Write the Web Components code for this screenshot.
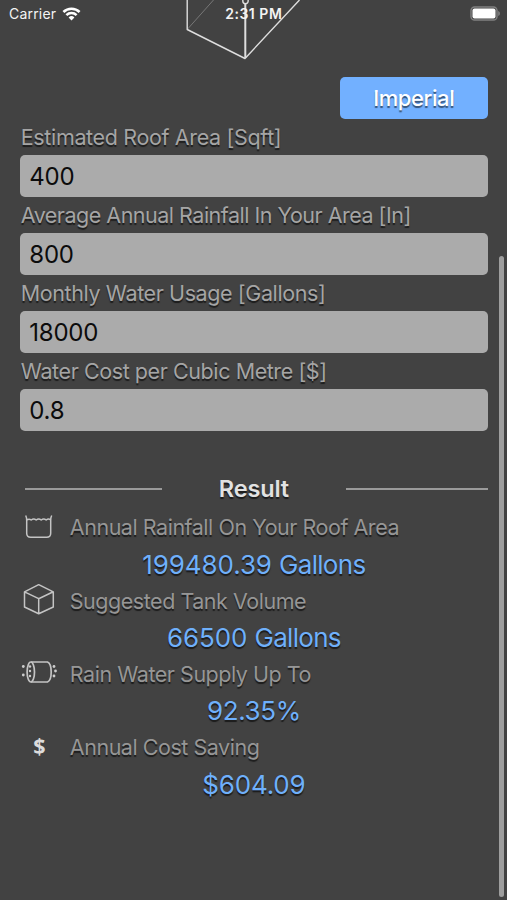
<!DOCTYPE html>
<html lang="en">
<head>
<meta charset="utf-8">
<title>Rain Water Calculator</title>
<style>
html, body { margin: 0; height: 100%; background: #424242; overflow: hidden; }
body { font-family: Inter, "Liberation Sans", sans-serif; }
</style>
</head>
<body>
<rain-app></rain-app>
<script>
const define = (name, html) => customElements.define(name, class extends HTMLElement {
  constructor() {
    super();
    this.attachShadow({ mode: 'open' }).innerHTML = html;
  }
});

define('status-bar', `
<style>
:host { display: grid; grid-template-columns: 1fr auto 1fr; align-items: center; height: 27px; padding: 0 7px 0 9px; color: #f4f4f4; box-sizing: border-box; font-size: 14px; line-height: 27px; }
.left { display: flex; align-items: center; gap: 6px; letter-spacing: .2px; }
.time { font-weight: 600; letter-spacing: .52px; margin-right: 1.500px; }
.right { display: flex; justify-content: flex-end; }
svg { display: block; }
</style>
<div class="left"><span>Carrier</span>
<svg width="19" height="15" viewBox="0 0 19 15" fill="none" stroke="#fff" stroke-width="2.5"><path d="M1.4 6a11.5 11.5 0 0 1 16.2 0M4.4 9.2a7.2 7.2 0 0 1 10.2 0"/><path d="M9.5 14.4 6.6 11.4a4.1 4.1 0 0 1 5.8 0z" fill="#fff" stroke="none"/></svg></div>
<span class="time">2:31 PM</span>
<div class="right"><svg width="30" height="15" viewBox="0 0 30 15"><rect x="1" y="1" width="26" height="13" rx="3.6" fill="none" stroke="#818181" stroke-width="1.4"/><rect x="2.5" y="2.5" width="23" height="10" rx="2" fill="#fff"/><path d="M28.200 5v5c1.300-.5 1.700-1.500 1.700-2.500s-.4-2-1.700-2.500z" fill="#818181"/></svg></div>`);

define('tank-drawing', `
<style>:host { display: block; } svg { display: block; }</style>
<svg width="130" height="62" viewBox="0 0 130 62" fill="none" stroke="#dedede" stroke-width="1.4" stroke-linejoin="round"><path d="M17.200 29.500 43.500 0" stroke="#777" stroke-width="1"/><path d="M17.200-2V29.500L75 58.500 129.500 0"/><path d="M75.300 4V58" stroke-width="2"/><circle cx="75.500" cy="1" r="2.700"/></svg>`);

define('unit-button', `
<style>
:host { display: block; }
button { display: block; width: 147.500px; height: 42px; padding: 1px 0 0; border: 0; border-radius: 5px; background: #72b0ff; color: #fff; font: 500 22px/40px Inter, sans-serif; letter-spacing: -.4px; text-shadow: 0 1.500px 1px #0008; }
</style><button type="button"><slot></slot></button>`);

customElements.define('input-field', class extends HTMLElement {
  constructor() {
    super();
    this.attachShadow({ mode: 'open' }).innerHTML = `
<style>
:host { display: block; }
label { display: block; height: 36.200px; font-size: 21.500px; line-height: 36px; padding-left: .5px; color: #a5a5a5; text-shadow: 0 1.500px 1px #0009; white-space: nowrap; letter-spacing: var(--ls, 0); }
.box { height: 42px; box-sizing: border-box; border-radius: 5px; background: #ababab; color: #0c0c0c; padding: 1px 9px 0; font-size: 24px; line-height: 42px; letter-spacing: -.25px; }
</style>
<label><slot></slot></label><div class="box"><span class="v"></span></div>`;
    this.shadowRoot.querySelector('.v').textContent = this.getAttribute('value');
  }
});

define('section-title', `
<style>
:host { display: grid; grid-template-columns: 137px 1fr 142px; align-items: center; height: 40px; padding-left: 5px; }
i { height: 1.500px; background: #9a9a9a; }
span { text-align: center; font-weight: 600; font-size: 23.500px; letter-spacing: -.15px; color: #e2e2e2; text-shadow: 0 1.500px 1px #0009; }
</style><i></i><span><slot></slot></span><i></i>`);

define('result-row', `
<style>
:host { display: block; height: 73.300px; }
.head { display: flex; align-items: center; height: 36px; }
.icon { width: 36px; height: 36px; margin-right: 13.500px; flex: none; }
.label { font-size: 21.500px; line-height: 36px; color: #969696; white-space: nowrap; text-shadow: 0 1.500px 1px #0009; letter-spacing: -.47px; padding-top: 1px; }
.value { text-align: center; font-size: 26px; line-height: 39px; color: #6fb0fb; text-shadow: 0 1.500px 1px #0009; letter-spacing: -.1px; }
::slotted(.unit) { letter-spacing: -.7px; }
</style>
<div class="head"><div class="icon"><slot name="icon"></slot></div><div class="label"><slot></slot></div></div>
<div class="value"><slot name="value"></slot></div>`);

const ICONS = {
  basin: '<path d="M5.700 6.500c.8 1.500 1 3 1 5v12.800c0 2.500 1.500 4 4 4h16c2.500 0 4-1.500 4-4v-12.800c0-2 .2-3.500 1-5M6.700 11c2-1.300 3-1.300 4.500 0 1.500-1.300 3.500-1.300 5 0 1.500-1.300 3.500-1.300 5 0 1.500-1.300 3.500-1.300 5 0 1.500-1.300 3-1.300 4.500 0"/>',
  cube: '<path d="M18.700 2.700 33.300 9.800V25L18.700 31.700 4.500 25V9.800zM4.500 9.800 18.700 16.700 33.300 9.800M18.700 16.700V31.700"/>',
  barrel: '<path d="M11 7H27.500c2.500 1 3.700 5 3.700 10s-1.200 9-3.700 10H11" stroke-width="1.700"/><ellipse cx="10.800" cy="17" rx="3.700" ry="10" stroke-width="1.700"/><g fill="#ccc" stroke="none"><circle cx="3.300" cy="11.500" r="1.400"/><circle cx="3.300" cy="20" r="1.400"/><circle cx="10" cy="11.500" r="1.200"/><circle cx="10" cy="16" r="1.200"/><circle cx="10" cy="21" r="1.200"/><circle cx="34" cy="11.500" r="1.400"/><circle cx="35.500" cy="16" r="1.400"/><circle cx="34" cy="21" r="1.400"/></g>',
};
customElements.define('line-icon', class extends HTMLElement {
  constructor() {
    super();
    const name = this.getAttribute('name');
    this.attachShadow({ mode: 'open' }).innerHTML = `
<style>:host { display: block; width: 36px; height: 36px; } svg { display: block; overflow: visible; } b { display: block; text-align: center; padding-left: 2px; font: 700 21.500px/34px "Open Sans", sans-serif; color: #dcdcdc; }</style>` +
      (name === 'dollar' ? '<b>$</b>' : `<svg width="36" height="36" fill="none" stroke="#c4c4c4" stroke-width="1.500" stroke-linejoin="round">${ICONS[name]}</svg>`);
  }
});

define('rain-app', `
<style>
:host { display: block; position: relative; width: 507px; height: 900px; overflow: hidden; background: #424242; }
tank-drawing { position: absolute; left: 170px; top: 0; }
status-bar { position: relative; }
main { display: flex; flex-direction: column; padding: 49.500px 19.500px 0 20.300px; }
unit-button { align-self: flex-end; }
section-title { margin-top: 37.500px; }
.f1 { --ls: -.35px; } .f2 { --ls: -.5px; } .f3 { --ls: -.4px; } .f4 { --ls: -.42px; }
.unit { letter-spacing: -.7px; }
.scroll { position: absolute; right: 3px; top: 256px; width: 5px; height: 641px; border-radius: 3px; background: #9e9e9e; }
</style>
<tank-drawing></tank-drawing>
<status-bar></status-bar>
<main>
<unit-button>Imperial</unit-button>
<input-field class="f1" value="400">Estimated Roof Area [Sqft]</input-field>
<input-field class="f2" value="800">Average Annual Rainfall In Your Area [In]</input-field>
<input-field class="f3" value="18000">Monthly Water Usage [Gallons]</input-field>
<input-field class="f4" value="0.8">Water Cost per Cubic Metre [$]</input-field>
<section-title>Result</section-title>
<result-row><line-icon slot="icon" name="basin"></line-icon>Annual Rainfall On Your Roof Area<span slot="value">199480.39 <span class="unit">Gallons</span></span></result-row>
<result-row><line-icon slot="icon" name="cube"></line-icon>Suggested Tank Volume<span slot="value">66500 <span class="unit">Gallons</span></span></result-row>
<result-row><line-icon slot="icon" name="barrel"></line-icon>Rain Water Supply Up To<span slot="value" style="letter-spacing:-.4px">92.35%</span></result-row>
<result-row><line-icon slot="icon" name="dollar"></line-icon>Annual Cost Saving<span slot="value" style="letter-spacing:-.2px">$604.09</span></result-row>
</main>
<div class="scroll"></div>`);
</script>
</body>
</html>
